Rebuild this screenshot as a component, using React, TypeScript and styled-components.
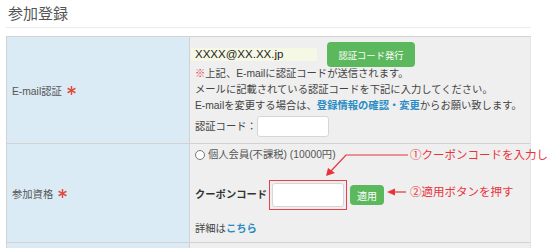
import React from "react";
import styled, { createGlobalStyle } from "styled-components";
import { FaAsterisk } from "react-icons/fa";

const GlobalStyle = createGlobalStyle`
  html, body {
    margin: 0;
    padding: 0;
    background: #fff;
    overflow: hidden;
  }
  body {
    font-family: "Liberation Sans", "Noto Sans CJK JP", sans-serif;
    color: #444;
  }
`;

const Page = styled.div`
  width: 525px;
  padding-left: 6px;
`;

const Title = styled.h2`
  margin: 0 0 8px;
  height: 27px;
  line-height: 27px;
  padding-left: 2px;
  font-size: 15px;
  font-weight: normal;
  color: #555;
  border-bottom: 1px solid #ececec;
`;

const Table = styled.div`
  border-top: 1px solid #d2d2d2;
  border-left: 1px solid #d2d2d2;
  border-right: 1px solid #e4e4e4;
`;

const Row = styled.div<{ $h?: number }>`
  display: grid;
  grid-template-columns: 183px 1fr;
  min-height: ${(p) => (p.$h ? `${p.$h}px` : "auto")};
  border-bottom: 1px solid #d2d2d2;
`;

const Label = styled.div`
  background: #daebf5;
  border-right: 1px solid #d2d2d2;
  display: flex;
  align-items: center;
  gap: 5px;
  padding-left: 5px;
  font-size: 10.3px;
  color: #555;
`;

const Required = styled(FaAsterisk)`
  color: #e4473b;
  width: 9px;
  height: 9px;
`;

const Cell = styled.div<{ $pad: string }>`
  position: relative;
  background: #efefef;
  padding: ${(p) => p.$pad};
  font-size: 10.3px;
  line-height: 16px;
  color: #444;
`;

const EmailRow = styled.div`
  display: flex;
  align-items: center;
  height: 25px;
`;

const EmailBox = styled.span`
  margin-left: -4px;
  width: 118px;
  padding: 0 4px;
  height: 13px;
  line-height: 13px;
  background: #f6f8e6;
  font-size: 11.5px;
  color: #222;
`;

const GreenButton = styled.button<{ $w: number; $h: number; $fs: number }>`
  width: ${(p) => p.$w}px;
  height: ${(p) => p.$h}px;
  margin-left: ${(p) => (p.$w > 50 ? 10 : 3)}px;
  border: none;
  border-radius: 4px;
  background: #5cb85c;
  color: #fff;
  font-family: inherit;
  font-size: ${(p) => p.$fs}px;
  padding: 0;
`;

const Lines = styled.div`
  margin-top: -1px;
`;

const Red = styled.span`
  color: #e53b3b;
`;

const Link = styled.a`
  color: #2a8cc4;
  font-weight: bold;
  text-decoration: none;
`;

const FieldRow = styled.div<{ $mt: number; $h: number }>`
  display: flex;
  align-items: center;
  margin-top: ${(p) => p.$mt}px;
  height: ${(p) => p.$h}px;
`;

const TextInput = styled.input<{ $w: number; $h: number }>`
  box-sizing: border-box;
  width: ${(p) => p.$w}px;
  height: ${(p) => p.$h}px;
  border: 1px solid #d6d6d6;
  border-radius: 3px;
  background: #fff;
  padding: 0 4px;
`;

const Radio = styled.span`
  display: inline-flex;
  align-items: center;
  gap: 3px;
  color: #555;

  &::before {
    content: "";
    width: 8px;
    height: 8px;
    border: 1px solid #777;
    border-radius: 50%;
    background: #fff;
  }
`;

const CouponLabel = styled.span`
  font-weight: bold;
  color: #333;
  margin-right: 2px;
`;

const Highlight = styled.div`
  border: 1px solid #e8414d;
  padding: 2px;
  display: flex;
`;

const Note = styled.div<{ $top: number }>`
  position: absolute;
  left: 220px;
  top: ${(p) => p.$top}px;
  white-space: nowrap;
  font-size: 11.5px;
  line-height: 16px;
  color: #e8333c;
`;

const Arrows = styled.svg`
  position: absolute;
  left: 0;
  top: 0;
  overflow: visible;
`;

export default function App() {
  return (
    <>
      <GlobalStyle />
      <Page>
        <Title>参加登録</Title>
        <Table>
          <Row>
            <Label>
              E-mail認証 <Required />
            </Label>
            <Cell $pad="5px 5px 6px">
              <EmailRow>
                <EmailBox>XXXX@XX.XX.jp</EmailBox>
                <GreenButton $w={88} $h={25} $fs={9.3}>
                  認証コード発行
                </GreenButton>
              </EmailRow>
              <Lines>
                <div>
                  <Red>※</Red>上記、E-mailに認証コードが送信されます。
                </div>
                <div>メールに記載されている認証コードを下記に入力してください。</div>
                <div>
                  E-mailを変更する場合は、<Link>登録情報の確認・変更</Link>からお願い致します。
                </div>
              </Lines>
              <FieldRow $mt={2} $h={21}>
                <span>認証コード：</span>
                <TextInput $w={72} $h={21} />
              </FieldRow>
            </Cell>
          </Row>
          <Row>
            <Label>
              参加資格 <Required />
            </Label>
            <Cell $pad="3px 5px 5px">
              <Radio>個人会員(不課税) (10000円)</Radio>
              <FieldRow $mt={15} $h={30}>
                <CouponLabel>クーポンコード</CouponLabel>
                <Highlight>
                  <TextInput $w={72} $h={24} />
                </Highlight>
                <GreenButton $w={34} $h={20} $fs={10}>
                  適用
                </GreenButton>
              </FieldRow>
              <FieldRow $mt={11} $h={16}>
                <span>
                  詳細は<Link>こちら</Link>
                </span>
              </FieldRow>
              <Arrows width="1" height="1">
                <polyline points="218,11 156,11 141,27" fill="none" stroke="#e8333c" strokeWidth="1.2" />
                <polygon points="136,32 138,24 145,29" fill="#e8333c" />
                <line x1="216" y1="48" x2="203" y2="48" stroke="#e8333c" strokeWidth="1.2" />
                <polygon points="197,48 205,44.5 205,51.5" fill="#e8333c" />
              </Arrows>
              <Note $top={3}>①クーポンコードを入力し</Note>
              <Note $top={40}>②適用ボタンを押す</Note>
            </Cell>
          </Row>
          <Row $h={6}>
            <Label />
            <Cell $pad="0" />
          </Row>
        </Table>
      </Page>
    </>
  );
}
